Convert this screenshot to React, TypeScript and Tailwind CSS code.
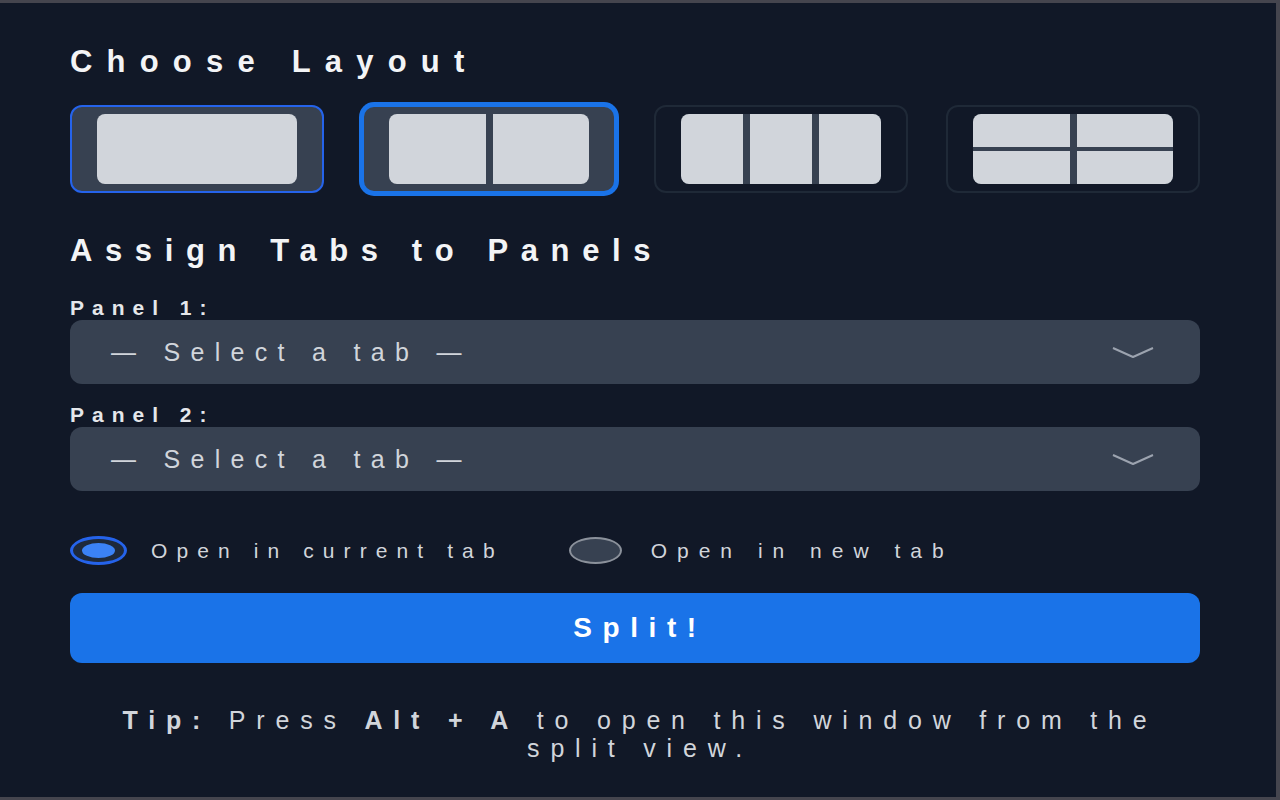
import clsx from 'clsx';

const layouts = [
  { id: 'single', cells: 1, grid: 'grid-cols-1' },
  { id: 'two', cells: 2, grid: 'grid-cols-2' },
  { id: 'three', cells: 3, grid: 'grid-cols-3' },
  { id: 'quad', cells: 4, grid: 'grid-cols-2 grid-rows-2' },
];

const hovered = 'single';
const selected = 'two';

function Chevron() {
  return (
    <svg width="44" height="13" viewBox="0 0 44 13" fill="none" className="shrink-0">
      <path d="M2 2 L22 11 L42 2" stroke="#9ca3af" strokeWidth="2" strokeLinejoin="round" />
    </svg>
  );
}

function PanelSelect({ label }: { label: string }) {
  return (
    <div className="flex flex-col">
      <span className="text-[21px] leading-[21px] font-bold tracking-[8px] text-[#e5e7eb]">{label}</span>
      <div className="mt-[2px] flex h-[64px] items-center justify-between rounded-xl bg-[#374151] pl-[41px] pr-[45px]">
        <span className="text-[25px] leading-[25px] tracking-[10.3px] text-[#d1d5db]">— Select a tab —</span>
        <Chevron />
      </div>
    </div>
  );
}

function Radio({ checked, label, tracking }: { checked?: boolean; label: string; tracking: string }) {
  return (
    <label className={clsx('flex items-center', checked ? 'gap-[24px]' : 'gap-[29px]')}>
      {checked ? (
        <span className="flex h-[29px] w-[57px] items-center justify-center rounded-[50%] border-[3px] border-[#2563eb] bg-[#1e293b]">
          <span className="h-[15px] w-[33px] rounded-[50%] bg-[#3b82f6]" />
        </span>
      ) : (
        <span className="h-[27px] w-[53px] rounded-[50%] border-2 border-[#8b919b] bg-[#374151]" />
      )}
      <span className={clsx('text-[21px] leading-[21px] text-[#d1d5db]', tracking)}>{label}</span>
    </label>
  );
}

export default function App() {
  return (
    <div className="h-[800px] w-[1280px] overflow-hidden border-t-[3px] border-r-4 border-b-[3px] border-[#45454e] bg-[#111827] font-['Liberation_Sans',Arial,sans-serif]">
      <div className="flex flex-col pt-[43px] pr-[76px] pl-[70px]">
        <h1 className="text-[31px] leading-[31px] font-bold tracking-[14.2px] text-[#f3f4f6]">Choose Layout</h1>

        <div className="mt-[28px] grid grid-cols-4 gap-x-[38px]">
          {layouts.map((l) => (
            <button
              key={l.id}
              className={clsx(
                'h-[88px] rounded-xl border-2 px-[25px] py-[7px]',
                l.id === selected && 'border-[#1a73e8] bg-[#374151] ring-3 ring-[#1a73e8]',
                l.id === hovered && 'border-[#2563eb] bg-[#374151]',
                l.id !== selected && l.id !== hovered && 'border-[#1f2937] bg-transparent',
              )}
            >
              <span
                className={clsx(
                  'grid h-full w-full gap-x-[7px] gap-y-[4px] overflow-hidden rounded-lg bg-[#374151]',
                  l.grid,
                )}
              >
                {Array.from({ length: l.cells }).map((_, i) => (
                  <span key={i} className="bg-[#d1d5db]" />
                ))}
              </span>
            </button>
          ))}
        </div>

        <h2 className="mt-[42px] text-[31px] leading-[31px] font-bold tracking-[12.6px] text-[#f3f4f6]">
          Assign Tabs to Panels
        </h2>

        <div className="mt-[31px] flex flex-col gap-[20px]">
          <PanelSelect label="Panel 1:" />
          <PanelSelect label="Panel 2:" />
        </div>

        <div className="mt-[45px] flex h-[29px] items-center gap-[65px]">
          <Radio checked label="Open in current tab" tracking="tracking-[9.1px]" />
          <Radio label="Open in new tab" tracking="tracking-[10px]" />
        </div>

        <button className="mt-[28px] h-[70px] rounded-xl bg-[#1a73e8] pl-[10px] text-[28px] font-bold tracking-[10.6px] text-white">
          Split!
        </button>

        <p className="mt-[43px] pl-[10px] text-center text-[25px] leading-[28px] tracking-[10.8px] text-[#d1d5db]">
          <b>Tip:</b> Press <b>Alt + A</b> to open this window from the split view.
        </p>
      </div>
    </div>
  );
}
